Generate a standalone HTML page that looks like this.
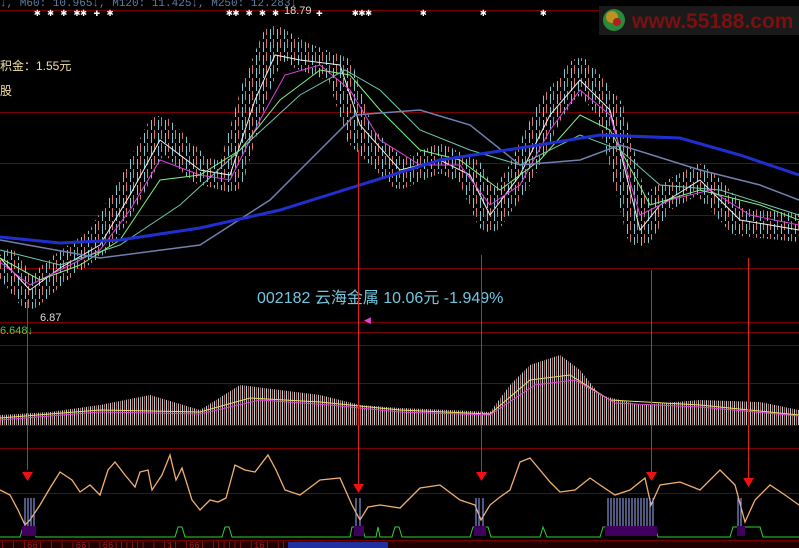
<!DOCTYPE html>
<html><head><meta charset="utf-8"><style>
html,body{margin:0;padding:0;background:#000;width:799px;height:548px;overflow:hidden}
svg{display:block}
</style></head><body>
<svg width="799" height="548" viewBox="0 0 799 548" xmlns="http://www.w3.org/2000/svg">
<defs>
<pattern id="cs" width="7" height="13" patternUnits="userSpaceOnUse">
<rect x="0" y="0" width="1" height="9" fill="#d07870"/>
<rect x="4" y="3" width="1" height="10" fill="#80c8d0"/>
</pattern>
<pattern id="vb" width="4" height="10" patternUnits="userSpaceOnUse">
<rect x="0" y="0" width="1" height="10" fill="#c06060"/>
<rect x="2" y="0" width="1" height="10" fill="#a0d8d8"/>
</pattern>
</defs>
<rect width="799" height="548" fill="#000"/>
<g stroke="#7a0000" stroke-width="1">
<line x1="0" y1="10.5" x2="799" y2="10.5"/>
<line x1="0" y1="112.5" x2="799" y2="112.5"/>
<line x1="0" y1="163.5" x2="799" y2="163.5"/>
<line x1="0" y1="215.5" x2="799" y2="215.5"/>
<line x1="0" y1="268.5" x2="799" y2="268.5"/>
<line x1="0" y1="322.5" x2="799" y2="322.5"/>
<line x1="0" y1="332.5" x2="799" y2="332.5"/>
<line x1="0" y1="345.5" x2="799" y2="345.5"/>
<line x1="0" y1="383.5" x2="799" y2="383.5"/>
<line x1="0" y1="425.5" x2="799" y2="425.5"/>
<line x1="0" y1="448.5" x2="799" y2="448.5"/>
<line x1="0" y1="493.5" x2="799" y2="493.5"/>
<line x1="0" y1="540.5" x2="799" y2="540.5"/>
</g>
<rect x="599" y="6" width="200" height="29" fill="#1a1a1a"/>
<circle cx="614" cy="20" r="11" fill="#2a8a3a"/><circle cx="612" cy="17" r="6" fill="#c09020"/><circle cx="617" cy="22" r="4" fill="#b02020"/>
<text x="632" y="28" font-family="Liberation Sans,sans-serif" font-weight="bold" font-size="21" fill="#7a1010">www.55188.com</text>
<text x="0" y="6" font-family="Liberation Mono,monospace" font-size="11" fill="#6080a0">↓, M60: 10.965↓, M120: 11.425↓, M250: 12.283↓</text>
<g fill="#fff" font-family="Liberation Mono,monospace" font-size="11">
<text x="34" y="16">✱   ✱   ✱  ✱✱ ✚  ✱</text>
<text x="226" y="16">✱✱ ✱  ✱ ✱</text>
<text x="316" y="16">✚</text>
<text x="352" y="16">✱✱✱</text><text x="420" y="16">✱</text><text x="480" y="16">✱</text><text x="540" y="16">✱</text>
</g>
<text x="284" y="14" font-family="Liberation Sans,sans-serif" font-size="11" fill="#ddd">18.79</text>
<text x="0" y="70" font-family="Liberation Sans,'Noto Sans CJK SC',sans-serif" font-size="12" fill="#f0e0a0">积金：1.55元</text>
<text x="0" y="95" font-family="Liberation Sans,'Noto Sans CJK SC',sans-serif" font-size="12" fill="#f0e0a0">股</text>
<polyline fill="none" stroke="url(#cs)" stroke-width="28" stroke-linejoin="round" points="0,255 30,295 60,268 100,240 130,190 160,130 200,170 230,178 255,90 275,40 300,55 340,70 360,135 400,175 440,158 470,172 490,218 520,175 550,110 580,72 610,110 640,232 660,200 700,178 740,222 770,225 799,228"/>
<polyline fill="none" stroke="#f0f0f0" stroke-width="1" points="0,258 30,290 60,268 100,245 130,195 160,140 200,170 230,175 255,100 275,55 300,60 340,65 360,125 400,170 440,160 470,175 490,215 520,175 550,115 580,80 610,110 640,230 660,205 700,180 740,220 770,225 799,230"/>
<polyline fill="none" stroke="#e040e0" stroke-width="1" points="0,262 30,285 60,270 100,250 130,210 160,160 200,175 230,180 260,120 285,75 320,65 350,90 380,140 420,165 460,165 490,205 520,185 550,130 580,90 610,115 640,215 670,200 710,190 750,215 799,225"/>
<polyline fill="none" stroke="#80f080" stroke-width="1" points="0,258 40,280 80,265 120,240 160,180 200,175 240,150 280,100 320,70 350,75 380,110 420,150 460,160 500,190 540,160 580,115 610,130 650,205 700,190 760,205 799,220"/>
<polyline fill="none" stroke="#70c8b0" stroke-width="1" points="0,250 60,265 120,245 180,205 240,150 300,95 345,70 380,90 420,130 470,150 520,165 580,135 620,150 660,185 720,190 799,215"/>
<polyline fill="none" stroke="#7080b0" stroke-width="1.5" points="0,240 100,258 200,245 270,200 320,150 355,115 420,110 470,125 520,165 580,160 620,145 700,170 760,185 799,200"/>
<polyline fill="none" stroke="#2030d0" stroke-width="3" points="0,237 60,243 120,240 200,228 280,210 360,185 440,160 520,148 600,135 680,138 740,155 799,175"/>
<text x="40" y="321" font-family="Liberation Sans,sans-serif" font-size="11" fill="#ddd">6.87</text>
<text x="0" y="334" font-family="Liberation Sans,sans-serif" font-size="11" fill="#40d040">6.648↓</text>
<text x="257" y="303" font-family="Liberation Sans,'Noto Sans CJK SC',sans-serif" font-size="16" fill="#70c8e0">002182 云海金属 10.06元 -1.949%</text>
<text x="364" y="323" font-size="9" fill="#e040e0">◀</text>
<polygon fill="url(#vb)" points="0,425 0,415 50,412 100,405 150,395 200,410 240,385 280,390 320,395 360,405 400,408 450,410 490,412 510,385 530,365 560,355 580,370 600,395 640,405 700,400 760,402 799,410 799,425"/>
<polyline fill="none" stroke="#e0e060" stroke-width="1" points="0,418 100,410 200,412 250,398 320,402 400,410 490,414 530,380 570,375 610,400 700,405 799,415"/>
<polyline fill="none" stroke="#e040e0" stroke-width="1" points="0,420 100,412 200,414 260,400 330,405 400,412 490,415 535,385 575,380 615,403 700,407 799,416"/>
<polyline fill="none" stroke="#f0b070" stroke-width="1.3" points="0,490 10,495 18,510 25,525 30,520 40,505 50,488 60,472 72,480 80,492 90,485 100,495 108,470 115,462 125,475 135,487 140,472 148,470 152,490 162,475 170,455 176,480 182,468 192,500 200,510 210,500 218,502 226,498 235,465 245,470 255,472 268,455 276,470 285,490 300,495 320,480 340,478 352,505 360,520 368,507 380,505 400,508 420,488 440,485 460,500 475,505 481,520 490,505 500,497 510,490 520,462 530,458 540,470 550,482 560,492 575,490 590,478 600,485 615,495 630,490 645,478 651,505 660,485 680,482 700,490 720,470 735,485 745,522 755,500 770,485 785,495 799,505"/>
<polyline fill="none" stroke="#30d030" stroke-width="1" points="0,537 20,537 23,527 33,527 36,537 175,537 178,527 182,527 185,537 222,537 225,527 229,527 232,537 350,537 352,527 362,527 365,537 376,537 378,527 380,537 392,537 395,527 399,527 402,537 470,537 473,527 488,527 491,537 540,537 543,527 547,537 600,537 603,527 655,527 658,537 730,537 733,527 760,527 763,537 799,537"/>
<g stroke="#a0b0ff" stroke-width="1"><path d="M25 498v28M28 498v28M31 498v28M34 498v28M356 498v28M360 498v28M476 498v28M479 498v28M483 498v28M738 498v28M741 498v28"/><path d="M608 498v28M611 498v28M614 498v28M617 498v28M620 498v28M623 498v28M626 498v28M629 498v28M632 498v28M635 498v28M638 498v28M641 498v28M644 498v28M647 498v28M650 498v28M653 498v28"/></g>
<g fill="#400060"><rect x="22" y="526" width="14" height="10"/><rect x="354" y="526" width="10" height="10"/><rect x="474" y="526" width="12" height="10"/><rect x="605" y="526" width="52" height="10"/><rect x="737" y="526" width="8" height="10"/></g>
<g stroke="#e02020" stroke-width="1"><line x1="27.5" y1="300" x2="27.5" y2="470"/><line x1="358.5" y1="150" x2="358.5" y2="484"/><line x1="481.5" y1="255" x2="481.5" y2="472"/><line x1="651.5" y1="270" x2="651.5" y2="472"/><line x1="748.5" y1="258" x2="748.5" y2="478"/></g>
<g fill="#f01010"><polygon points="22,472 33,472 27.5,481"/><polygon points="353,484 364,484 358.5,493"/><polygon points="476,472 487,472 481.5,481"/><polygon points="646,472 657,472 651.5,481"/><polygon points="743,478 754,478 748.5,487"/></g>
<rect x="0" y="541" width="799" height="7" fill="#200000"/>
<text x="0" y="548" font-family="Liberation Mono,monospace" font-size="9" fill="#a02020">| |  |66| |  |  |66|   |66||||||  |    |1|  |66|  ||||||   |16|  |||||||  |</text>
<rect x="288" y="542" width="100" height="6" fill="#2030a0"/>
</svg>
</body></html>
